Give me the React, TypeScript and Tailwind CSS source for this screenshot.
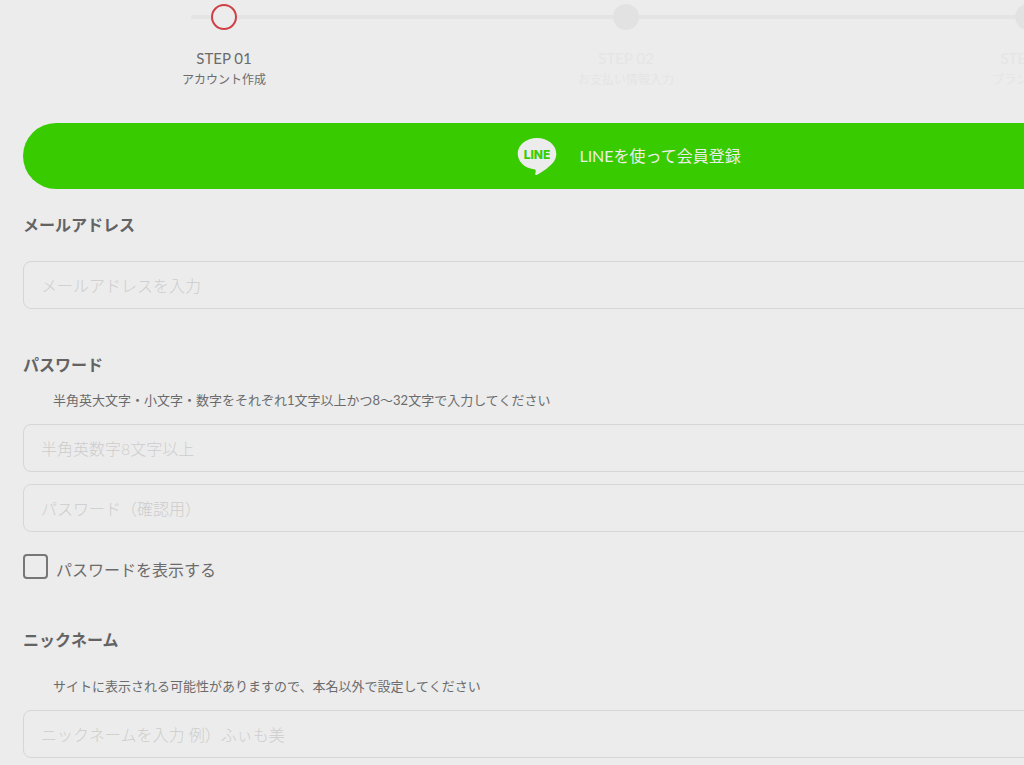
import { useState } from "react";
import type { ReactNode } from "react";
import clsx from "clsx";

const steps = [
  { label: "STEP 01", title: "アカウント作成" },
  { label: "STEP 02", title: "お支払い情報入力" },
  { label: "STEP 03", title: "プランの選択" },
];

const inputClass =
  "block h-12 w-full rounded-lg border border-[#d6d6d6] bg-transparent px-[17px] text-base text-[#6b6b6b] placeholder:font-light placeholder:text-[#cdcdcd] focus:border-[#999] focus:outline-none";

function Steps({ current }: { current: number }) {
  return (
    <ol className="grid grid-cols-3 pt-1">
      {steps.map((step, i) => (
        <li key={step.label} className="text-center">
          <div className="flex items-center">
            <span className={clsx("flex flex-1", i === 0 && "justify-end")}>
              <span className={clsx("h-1 bg-[#e4e4e4]", i === 0 ? "w-5" : "w-full")} />
            </span>
            <span
              className={clsx(
                "size-[26px] rounded-full",
                i === current ? "border-2 border-[#cf3f46]" : "bg-[#e2e2e2]"
              )}
            />
            <span className="flex flex-1">
              <span
                className={clsx(
                  "h-1 bg-[#e4e4e4]",
                  i === steps.length - 1 ? "w-5" : "w-full"
                )}
              />
            </span>
          </div>
          <div className={i === current ? "text-[#6b6b6b]" : "text-[#e5e5e5]"}>
            <p className="mt-4 text-[15px] leading-6">{step.label}</p>
            <p className="text-xs leading-5">{step.title}</p>
          </div>
        </li>
      ))}
    </ol>
  );
}

function LineLogo() {
  return (
    <svg viewBox="0 0 40 38" className="h-[38px] w-10" aria-hidden="true">
      <path
        d="M20 1C9.3 1 .7 8 .7 16.700c0 7.800 6.900 14.300 16.200 15.500.7.1 1.500.4 1.700.9.2.6.1 1.400 0 2l-.3 1.700c-.1.5-.1 1.900 1.700 1 2.100-.9 11.200-6.600 15.300-11.300 2.800-3.100 4-6.300 4-9.800C39.300 8 30.700 1 20 1z"
        fill="#ececec"
      />
      <text
        x="20"
        y="22"
        textAnchor="middle"
        fontSize="12"
        fontWeight="800"
        fill="#38cc00"
        className="font-['Inter',sans-serif]"
      >
        LINE
      </text>
    </svg>
  );
}

function FieldLabel({ htmlFor, children }: { htmlFor: string; children: ReactNode }) {
  return (
    <label htmlFor={htmlFor} className="block text-base leading-6 font-bold text-[#636363]">
      {children}
    </label>
  );
}

export default function App() {
  const [showPassword, setShowPassword] = useState(false);
  const passwordType = showPassword ? "text" : "password";

  return (
    <main className="min-h-screen overflow-hidden bg-[#ececec] pl-[23px] font-['Lato','Noto_Sans_CJK_JP',sans-serif] text-[#6b6b6b]">
      <div className="w-[120.5%] pb-2">
        <Steps current={0} />

        <form onSubmit={(e) => e.preventDefault()}>
          <button
            type="button"
            className="mt-[33px] flex h-[66px] w-full items-center justify-center gap-[22px] rounded-full bg-[#38cc00] pl-1.5 text-base text-[#ececec]"
          >
            <LineLogo />
            LINEを使って会員登録
          </button>

          <div className="mt-6">
            <FieldLabel htmlFor="email">メールアドレス</FieldLabel>
            <input
              id="email"
              type="email"
              placeholder="メールアドレスを入力"
              className={clsx(inputClass, "mt-6")}
            />
          </div>

          <div className="mt-11">
            <FieldLabel htmlFor="password">パスワード</FieldLabel>
            <p className="mt-[11px] pl-[30px] text-[13px] leading-6">
              半角英大文字・小文字・数字をそれぞれ1文字以上かつ8〜32文字で入力してください
            </p>
            <input
              id="password"
              type={passwordType}
              placeholder="半角英数字8文字以上"
              className={clsx(inputClass, "mt-3")}
            />
            <input
              type={passwordType}
              aria-label="パスワード（確認用）"
              placeholder="パスワード（確認用）"
              className={clsx(inputClass, "mt-3")}
            />
            <label className="mt-[22px] flex w-fit items-start gap-2 text-base leading-8">
              <input
                type="checkbox"
                checked={showPassword}
                onChange={(e) => setShowPassword(e.target.checked)}
                className="size-[25px] appearance-none rounded-sm border-2 border-[#777] checked:bg-[#777]"
              />
              パスワードを表示する
            </label>
          </div>

          <div className="mt-[42px]">
            <FieldLabel htmlFor="nickname">ニックネーム</FieldLabel>
            <p className="mt-[22px] pl-[30px] text-[13px] leading-6">
              サイトに表示される可能性がありますので、本名以外で設定してください
            </p>
            <input
              id="nickname"
              type="text"
              placeholder="ニックネームを入力 例）ふぃも美"
              className={clsx(inputClass, "mt-3")}
            />
          </div>
        </form>
      </div>
    </main>
  );
}
